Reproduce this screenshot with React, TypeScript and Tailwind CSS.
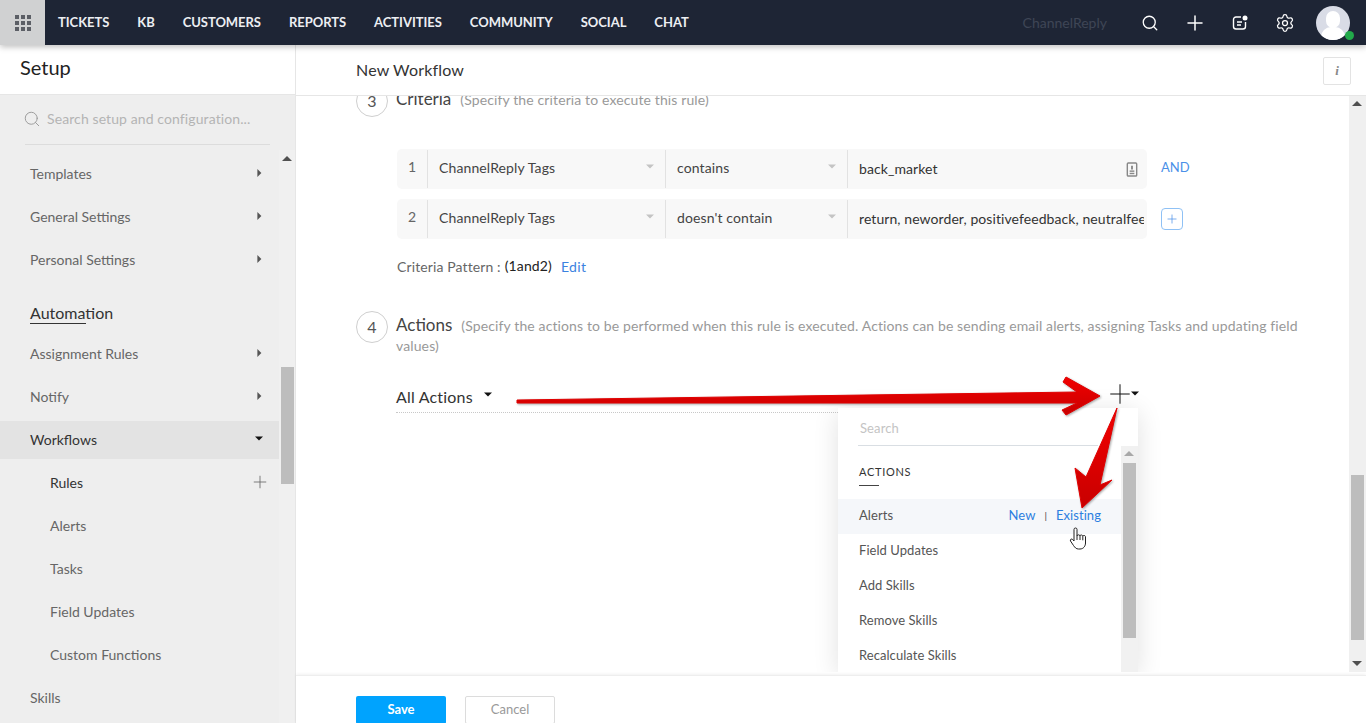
import React from 'react';
import { Search, Plus, Settings } from 'lucide-react';

const navItems = ['TICKETS', 'KB', 'CUSTOMERS', 'REPORTS', 'ACTIVITIES', 'COMMUNITY', 'SOCIAL', 'CHAT'];

const Caret = ({ dir, className }: { dir: 'up' | 'down' | 'right'; className: string }) => {
  const points = dir === 'up' ? '0,7 5,2 10,7' : dir === 'down' ? '0,2 10,2 5,7' : '3,0 8,5 3,10';
  return (
    <svg viewBox="0 0 10 10" className={className} fill="currentColor">
      <polygon points={points} />
    </svg>
  );
};

const SideRow = ({ label, arrow }: { label: string; arrow?: boolean }) => (
  <div className="h-[38px] mb-[5px] pl-[30px] pr-[16px] pb-[2px] flex items-center justify-between text-[14px] text-[#666]">
    <span>{label}</span>
    {arrow && <Caret dir="right" className="w-[8px] h-[8px] text-[#555]" />}
  </div>
);

const SubRow = ({ label, active }: { label: string; active?: boolean }) => (
  <div className={`h-[38px] mb-[5px] pl-[50px] pr-[9px] pb-[2px] flex items-center justify-between text-[14px] ${active ? 'text-[#333]' : 'text-[#666]'}`}>
    <span>{label}</span>
    {active && <Plus className="w-[20px] h-[20px] text-[#666]" strokeWidth={1} />}
  </div>
);

const Sidebar = () => (
  <aside className="w-[296px] shrink-0 flex flex-col border-r border-[#e6e6e6] bg-[#eeeeee]">
    <div className="h-[50px] shrink-0 bg-white border-b border-[#e6e6e6] pl-[20px] pb-[6px] flex items-center text-[20px] text-[#222]">
      Setup
    </div>
    <div className="h-[50px] shrink-0 mx-[25px] pb-[2px] border-b border-[#dcdcdc] flex items-center gap-[6px] text-[14px] tracking-[0.1px] text-[#b4b4b4]">
      <Search className="-ml-[2px] w-[18px] h-[18px] text-[#999]" strokeWidth={1.25} />
      <span>Search setup and configuration...</span>
    </div>
    <div className="flex-1 flex min-h-0 mt-[5px]">
      <div className="w-[279px] pt-[5px] overflow-hidden">
        <SideRow label="Templates" arrow />
        <SideRow label="General Settings" arrow />
        <SideRow label="Personal Settings" arrow />
        <div className="h-[51px] pl-[30px] pt-[18px]">
          <div className="text-[16px] leading-[21px] text-[#333]">Automation</div>
          <div className="w-[56px] h-px bg-[#333]" />
        </div>
        <SideRow label="Assignment Rules" arrow />
        <SideRow label="Notify" arrow />
        <div className="h-[38px] mt-[1px] mb-[5px] pl-[30px] pr-[16px] pb-[2px] flex items-center justify-between text-[14px] text-[#333] bg-[#e3e3e3]">
          <span>Workflows</span>
          <Caret dir="down" className="w-[8px] h-[8px] text-[#111]" />
        </div>
        <SubRow label="Rules" active />
        <SubRow label="Alerts" />
        <SubRow label="Tasks" />
        <SubRow label="Field Updates" />
        <SubRow label="Custom Functions" />
        <SideRow label="Skills" />
      </div>
      <div className="w-[16px] bg-[#f0f0f0] relative">
        <Caret dir="up" className="absolute left-[3px] top-[4px] w-[10px] h-[10px] text-[#505050]" />
        <div className="absolute left-[2px] top-[217px] w-[13px] h-[117px] bg-[#bdbdbd]" />
      </div>
    </div>
  </aside>
);

const CriteriaRow = ({ n, field, op, children }: { n: number; field: string; op: string; children: React.ReactNode }) => (
  <div className="w-[750px] h-[40px] flex items-center rounded-[5px] bg-[#f8f8f8] text-[14px] tracking-[0.12px] text-[#444]">
    <div className="w-[31px] h-[38px] flex items-center justify-center pb-[6px] border-r border-[#e2e2e2] text-[#666]">{n}</div>
    <div className="w-[238px] h-[38px] pl-[11px] pr-[11px] pb-[4px] flex items-center justify-between border-r border-[#e2e2e2]">
      <span>{field}</span>
      <Caret dir="down" className="w-[8px] h-[8px] text-[#c4c4c4]" />
    </div>
    <div className="w-[182px] h-[38px] pl-[11px] pr-[11px] pb-[4px] flex items-center justify-between border-r border-[#e2e2e2]">
      <span>{op}</span>
      <Caret dir="down" className="w-[8px] h-[8px] text-[#c4c4c4]" />
    </div>
    <div className="flex-1 min-w-0 pl-[11px] pr-[3px] pb-[2px] flex items-center justify-between tracking-[0.08px] text-[#333]">{children}</div>
  </div>
);

const StepCircle = ({ n }: { n: number }) => (
  <div className="w-[32px] h-[32px] shrink-0 rounded-full border border-[#cfcfcf] bg-white flex items-center justify-center text-[16px] text-[#555]">
    {n}
  </div>
);

const ActionsMenu = () => (
  <div className="absolute left-[542px] top-[312px] bottom-0 w-[300px] bg-white shadow-[0_4px_24px_rgba(0,0,0,0.12)] flex flex-col">
    <div className="h-[38px] mx-[20px] w-[240px] pl-[2px] pt-[4px] border-b border-[#d9dee3] flex items-center text-[13px] tracking-[0.1px] text-[#c4c4c4] shrink-0">
      Search
    </div>
    <div className="flex-1 flex min-h-0">
      <div className="w-[283px] overflow-hidden text-[13px] tracking-[0.06px] text-[#555]">
        <div className="h-[53px] pl-[21px] pt-[18px]">
          <div className="text-[11px] leading-[16px] tracking-[0.7px] text-[#333]">ACTIONS</div>
          <div className="w-[20px] h-px bg-[#444] mt-[5px]" />
        </div>
        <div className="h-[35px] pl-[21px] pr-[20px] pb-[2px] flex items-center justify-between bg-[#f5f7fa]">
          <span>Alerts</span>
          <span className="flex items-center text-[#2d7fe0]">
            New<span className="mx-[9px] text-[10px] text-[#444]">|</span>Existing
          </span>
        </div>
        {['Field Updates', 'Add Skills', 'Remove Skills', 'Recalculate Skills'].map((label) => (
          <div key={label} className="h-[35px] pl-[21px] pb-[2px] flex items-center">{label}</div>
        ))}
      </div>
      <div className="w-[17px] bg-[#f1f1f1] relative">
        <Caret dir="up" className="absolute left-[3px] top-[3px] w-[10px] h-[10px] text-[#a8a8a8]" />
        <div className="absolute left-[2px] top-[17px] w-[13px] h-[175px] bg-[#bdbdbd]" />
      </div>
    </div>
  </div>
);

const Main = () => (
  <main className="flex-1 min-w-0 flex flex-col bg-white">
    <div className="h-[51px] shrink-0 border-b border-[#e6e6e6] pl-[60px] pr-[15px] flex items-center justify-between relative z-10 bg-white">
      <span className="text-[16px] tracking-[0.16px] text-[#333]">New Workflow</span>
      <div className="w-[28px] h-[28px] mt-[2px] border border-[#e3e3e3] rounded-[2px] flex items-center justify-center font-[family-name:'Liberation_Serif',serif] italic font-bold text-[13px] text-[#888]">
        i
      </div>
    </div>
    <div className="flex-1 min-h-0 flex mb-[3px]">
      <div className="flex-1 min-w-0 relative overflow-hidden">
        <div className="-mt-[11px] pl-[60px]">
          <div className="flex h-[32px]">
            <StepCircle n={3} />
            <div className="ml-[8px] leading-[28px] text-[#999] text-[14px] tracking-[0.12px]">
              <span className="text-[17px] tracking-normal text-[#444] mr-[9px]">Criteria</span>
              (Specify the criteria to execute this rule)
            </div>
          </div>
          <div className="mt-[32px] ml-[41px] flex flex-col gap-[10px] relative">
            <div className="flex items-center">
              <CriteriaRow n={1} field="ChannelReply Tags" op="contains">
                <span>back_market</span>
                <svg viewBox="0 0 12 16" className="w-[12px] h-[15px] mr-[6px] mt-[2px] text-[#888]" fill="none" stroke="currentColor">
                  <rect x="1" y="1" width="10" height="14" rx="1" strokeWidth="1.5" />
                  <rect x="3.5" y="9" width="5" height="1.5" fill="currentColor" stroke="none" />
                  <rect x="3.5" y="11.5" width="5" height="1.5" fill="currentColor" stroke="none" />
                  <rect x="5" y="4" width="2" height="4" fill="currentColor" stroke="none" />
                </svg>
              </CriteriaRow>
              <span className="ml-[14px] -mt-[2px] text-[13px] text-[#4a90e8]">AND</span>
            </div>
            <div className="flex items-center">
              <CriteriaRow n={2} field="ChannelReply Tags" op="doesn't contain">
                <span className="block w-[285px] overflow-hidden whitespace-nowrap">return, neworder, positivefeedback, neutralfeedback</span>
              </CriteriaRow>
              <div className="ml-[14px] w-[22px] h-[22px] rounded-[4px] border border-[#8fc1f5] flex items-center justify-center text-[#4a90e8]">
                <Plus className="w-[14px] h-[14px]" strokeWidth={1.25} />
              </div>
            </div>
          </div>
          <div className="mt-[17px] ml-[41px] h-[20px] flex items-center text-[14px] tracking-[0.12px] text-[#666]">
            Criteria Pattern :<span className="ml-[4px] -mt-[2px] text-[#222]">(1and2)</span>
            <span className="ml-[9px] tracking-[0.4px] text-[#3b82e0]">Edit</span>
          </div>
          <div className="mt-[35px] flex">
            <StepCircle n={4} />
            <div className="ml-[8px] w-[905px] mt-[4px] text-[14px] tracking-[0.12px] leading-[20px] text-[#999]">
              <span className="text-[17px] tracking-normal text-[#444] mr-[9px]">Actions</span>
              (Specify the actions to be performed when this rule is executed. Actions can be sending email alerts, assigning Tasks and updating field values)
            </div>
          </div>
          <div className="mt-[24px] ml-[40px] w-[744px] flex">
            <div className="w-[442px] h-[33px] pt-[1px] border-b border-dotted border-[#c8c8c8] flex items-center text-[16px] tracking-[0.2px] text-[#333]">
              All Actions
              <Caret dir="down" className="w-[8px] h-[8px] ml-[11px] -mt-[4px] text-[#111]" />
            </div>
            <div className="ml-auto h-[28px] flex items-center">
              <Plus className="-mr-[5px] w-[32px] h-[32px] text-[#111]" strokeWidth={0.75} />
              <Caret dir="down" className="w-[8px] h-[8px] mr-[1px] text-[#111]" />
            </div>
          </div>
        </div>
        <ActionsMenu />
      </div>
      <div className="w-[17px] shrink-0 bg-[#f0f0f0] relative">
        <Caret dir="up" className="absolute left-[3px] top-[3px] w-[10px] h-[10px] text-[#505050]" />
        <div className="absolute left-[2px] top-[379px] w-[13px] h-[165px] bg-[#bdbdbd]" />
        <Caret dir="down" className="absolute left-[3px] bottom-[3px] w-[10px] h-[10px] text-[#505050]" />
      </div>
    </div>
    <div className="h-[48px] shrink-0 border-t border-[#eeeeee] shadow-[0_-1px_3px_rgba(0,0,0,0.06)] relative pl-[60px] pt-[20px] flex gap-[19px] text-[13px] overflow-hidden">
      <div className="w-[90px] h-[28px] rounded-[2px] bg-[#00a3fe] text-white font-bold flex items-center justify-center">Save</div>
      <div className="w-[90px] h-[28px] rounded-[2px] border border-[#dcdcdc] text-[#999] flex items-center justify-center">Cancel</div>
    </div>
  </main>
);

export default function App() {
  return (
    <div className="relative w-[1366px] h-[723px] overflow-hidden flex flex-col bg-white font-[family-name:Lato,sans-serif]">
      <header className="h-[45px] shrink-0 bg-[#1e2535] flex items-center relative z-20 shadow-[0_2px_6px_rgba(0,0,0,0.25)] text-white">
        <div className="w-[45px] h-[45px] bg-[#d0d1d2] grid place-items-center">
          <div className="grid grid-cols-3 gap-[2px]">
            {Array.from({ length: 9 }).map((_, i) => (
              <span key={i} className="w-[4px] h-[4px] bg-[#5c5f66]" />
            ))}
          </div>
        </div>
        <nav className="ml-[13px] flex gap-[28px] text-[13px] font-bold tracking-[-0.04px] text-[#eceef2]">
          {navItems.map((item) => (
            <span key={item}>{item}</span>
          ))}
        </nav>
        <span className="ml-auto text-[14px] text-[#3f4656]">ChannelReply</span>
        <Search className="ml-[34px] w-[18px] h-[18px]" strokeWidth={1.75} />
        <Plus className="ml-[24px] w-[24px] h-[24px]" strokeWidth={1.5} />
        <svg viewBox="0 0 16 16" className="ml-[25px] w-[16px] h-[16px]" fill="none" stroke="white" strokeWidth="1.4">
          <path d="M9 2H4a2.5 2.5 0 0 0-2.5 2.5v7A2.5 2.5 0 0 0 4 14h7a2.5 2.5 0 0 0 2.5-2.5V7" />
          <path d="M5 7h5M5 10h4" />
          <circle cx="13" cy="3" r="2.5" fill="white" stroke="none" />
        </svg>
        <Settings className="ml-[27px] w-[20px] h-[20px]" strokeWidth={1.5} />
        <div className="relative ml-[21px] mr-[16px] w-[34px] h-[34px] rounded-full bg-[#d9dce6] overflow-hidden">
          <div className="absolute left-[10px] top-[5px] w-[14px] h-[17px] rounded-full bg-white" />
          <div className="absolute left-[5px] top-[21px] w-[24px] h-[16px] rounded-t-[10px] bg-white" />
        </div>
        <span className="absolute left-[1345px] top-[31px] w-[9px] h-[9px] rounded-full bg-[#22a94a]" />
      </header>
      <div className="flex-1 min-h-0 flex">
        <Sidebar />
        <Main />
      </div>
      <svg className="absolute left-0 top-0 z-30 pointer-events-none drop-shadow-[1px_1px_1px_rgba(0,0,0,0.35)]" width="1366" height="723">
        <defs>
          <linearGradient id="red" x1="0" y1="0" x2="0" y2="1">
            <stop offset="0" stopColor="#f20000" />
            <stop offset="1" stopColor="#c80000" />
          </linearGradient>
        </defs>
        <polygon fill="url(#red)" stroke="#e00000" strokeWidth="1" strokeLinejoin="round" points="517,400 1077,392 1063,382 1066,377 1100,396 1066,415 1062,410 1077,403 517,403" />
        <polygon fill="url(#red)" stroke="#e00000" strokeWidth="1" strokeLinejoin="round" points="1117,408 1100,485 1112,480 1082,508 1075,468 1086,477" />
      </svg>
      <svg viewBox="0 0 18 24" className="absolute left-[1069px] top-[526px] z-30 w-[18px] h-[24px]" fill="white" stroke="#222" strokeWidth="1" strokeLinejoin="round">
        <path d="M5 3.5a1.5 1.5 0 0 1 3 0V10c0-1.6 3-1.6 3 0 0-1.4 2.8-1.4 2.8 .3 0-1.2 2.7-1.2 2.7 .5V17c0 3-2 6-5.5 6H9.5C7 23 6 21.5 4.5 19.5L1.5 15c-.8-1.4 1-2.7 2.2-1.5L5 15Z" />
        <path d="M8 10v4M11 10v4M13.8 10.3v4" fill="none" />
      </svg>
    </div>
  );
}
